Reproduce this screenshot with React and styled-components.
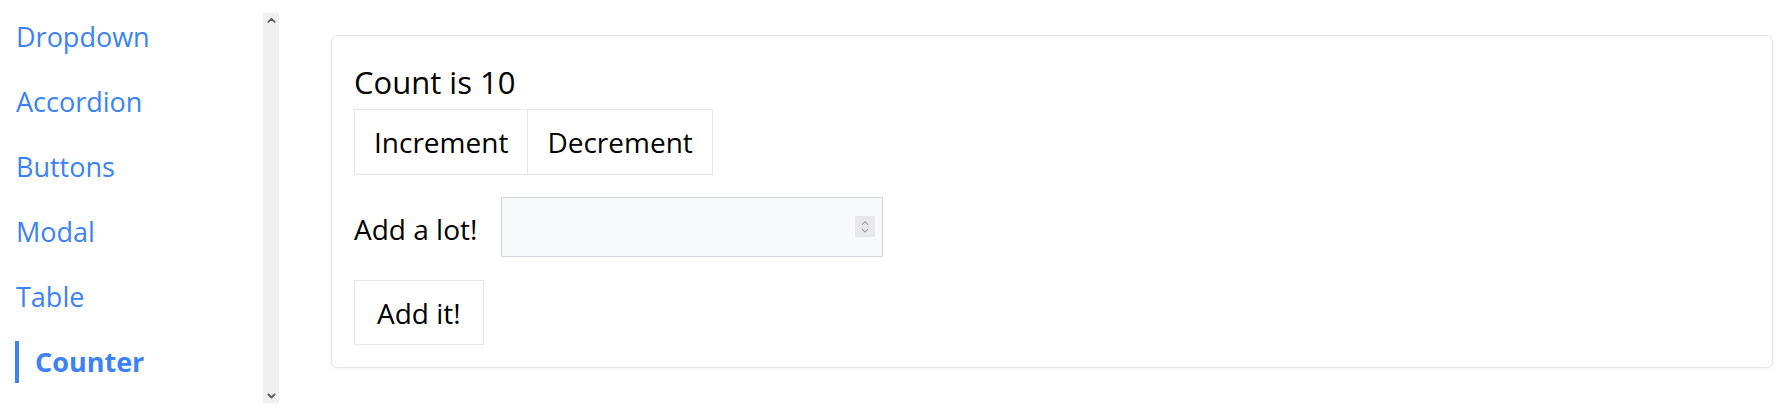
import React, { useState } from "react";
import styled, { createGlobalStyle } from "styled-components";

const GlobalStyle = createGlobalStyle`
  html, body {
    margin: 0;
    padding: 0;
    background: #ffffff;
    font-family: "Open Sans", "Noto Sans", sans-serif;
    color: #000000;
  }
  * { box-sizing: border-box; }
`;

const Page = styled.div`
  display: flex;
  height: 416px;
  width: 1791px;
  overflow: hidden;
`;

const Sidebar = styled.aside`
  display: flex;
  width: 279px;
  height: 390px;
  margin-top: 13px;
  flex-shrink: 0;
`;

const NavList = styled.nav`
  flex: 1;
  display: flex;
  flex-direction: column;
  gap: 23px;
  padding: 3px 0 0 15px;
  overflow: hidden;
`;

const NavItem = styled.a`
  display: block;
  font-size: 27px;
  line-height: 42px;
  height: 42px;
  color: #3b82f6;
  text-decoration: none;
  white-space: nowrap;
  font-weight: ${(p) => (p.$active ? 700 : 400)};
  border-left: ${(p) => (p.$active ? "4px solid #3b82f6" : "none")};
  padding-left: ${(p) => (p.$active ? "16px" : "1px")};
  cursor: pointer;
`;

const Track = styled.div`
  width: 16px;
  background: #f0f0f0;
  display: flex;
  flex-direction: column;
  justify-content: space-between;
  align-items: center;
  padding: 4px 0;
  color: #5a5a5a;
`;

const Main = styled.main`
  flex: 1;
  padding: 35px 18px 0 52px;
`;

const Card = styled.section`
  background: #ffffff;
  border: 1px solid #e6e6e6;
  border-radius: 7px;
  box-shadow: 0 1px 3px rgba(0, 0, 0, 0.06);
  padding: 22px;
  height: 333px;
  display: flex;
  flex-direction: column;
  align-items: flex-start;
`;

const CountText = styled.div`
  font-size: 31px;
  line-height: 42px;
  margin: 3px 0 6px;
`;

const ButtonGroup = styled.div`
  display: flex;
`;

const Button = styled.button`
  font-family: inherit;
  font-size: 28px;
  color: #000000;
  background: #ffffff;
  border: 1px solid #e5e7eb;
  height: 66px;
  padding: 0 ${(p) => p.$px || 20}px;
  margin-left: ${(p) => (p.$joined ? "-1px" : "0")};
  cursor: pointer;
`;

const Row = styled.div`
  display: flex;
  align-items: center;
  gap: 24px;
  margin: 22px 0 23px;
`;

const Label = styled.label`
  font-size: 28px;
  line-height: 42px;
  padding-top: 4px;
`;

const InputWrap = styled.div`
  position: relative;
  width: 382px;
  height: 60px;
`;

const NumberInput = styled.input`
  width: 100%;
  height: 100%;
  background: #f8f9fb;
  border: 1px solid #d4d7dd;
  border-radius: 0;
  font-family: inherit;
  font-size: 24px;
  padding: 0 40px 0 12px;
  outline: none;
  -moz-appearance: textfield;
  &::-webkit-inner-spin-button,
  &::-webkit-outer-spin-button {
    -webkit-appearance: none;
    margin: 0;
  }
`;

const Spinner = styled.div`
  position: absolute;
  right: 8px;
  top: 19px;
  width: 20px;
  height: 21px;
  background: #e8e8ec;
  display: flex;
  flex-direction: column;
  align-items: center;
  justify-content: center;
  gap: 2px;
  color: #9a9aa0;
  pointer-events: none;
`;

const Chevron = ({ up, size = 10, stroke = 1.6 }) => (
  <svg width={size} height={size * 0.7} viewBox="0 0 10 7" fill="none">
    <path
      d={up ? "M1.5 5.5 L5 2 L8.5 5.5" : "M1.5 1.5 L5 5 L8.5 1.5"}
      stroke="currentColor"
      strokeWidth={stroke}
      strokeLinecap="round"
      strokeLinejoin="round"
    />
  </svg>
);

const items = ["Dropdown", "Accordion", "Buttons", "Modal", "Table", "Counter"];

export default function App() {
  const [count, setCount] = useState(10);
  const [amount, setAmount] = useState("");
  return (
    <>
      <GlobalStyle />
      <Page>
        <Sidebar>
          <NavList>
            {items.map((it) => (
              <NavItem key={it} $active={it === "Counter"}>
                {it}
              </NavItem>
            ))}
          </NavList>
          <Track>
            <Chevron up size={9} stroke={2} />
            <Chevron size={9} stroke={2} />
          </Track>
        </Sidebar>
        <Main>
          <Card>
            <CountText>Count is {count}</CountText>
            <ButtonGroup>
              <Button $px={19} onClick={() => setCount((c) => c + 1)}>Increment</Button>
              <Button $px={19} $joined onClick={() => setCount((c) => c - 1)}>Decrement</Button>
            </ButtonGroup>
            <Row>
              <Label htmlFor="amount">Add a lot!</Label>
              <InputWrap>
                <NumberInput
                  id="amount"
                  type="number"
                  value={amount}
                  onChange={(e) => setAmount(e.target.value)}
                />
                <Spinner>
                  <Chevron up size={8} stroke={1.3} />
                  <Chevron size={8} stroke={1.3} />
                </Spinner>
              </InputWrap>
            </Row>
            <Button $px={22} onClick={() => setCount((c) => c + (Number(amount) || 0))}>Add it!</Button>
          </Card>
        </Main>
      </Page>
    </>
  );
}
